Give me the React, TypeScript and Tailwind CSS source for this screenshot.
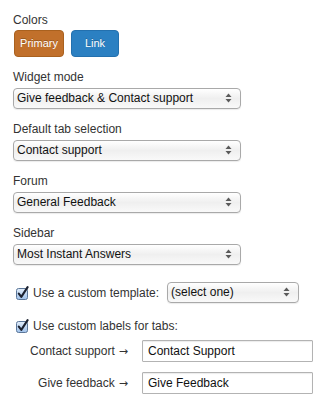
import React, { useState } from 'react';

const SelectArrows = () => (
  <svg className="w-[7px] h-[10px]" viewBox="0 0 7 10" fill="#5a5a5a">
    <path d="M3.5 0.5 L6.5 4 L0.5 4 Z" />
    <path d="M3.5 9.5 L6.5 6 L0.5 6 Z" />
  </svg>
);

interface MacSelectProps {
  options: string[];
  width: string;
}

const MacSelect: React.FC<MacSelectProps> = ({ options, width }) => {
  const [value, setValue] = useState(options[0]);
  return (
    <div className={`relative ${width} h-[21px]`}>
      <select
        value={value}
        onChange={(e) => setValue(e.target.value)}
        className="appearance-none w-full h-full pl-[3px] pr-[20px] text-[12px] leading-[19px] text-[#111] border border-[#a9a9a9] rounded-[4px] bg-linear-to-b from-white via-[#efefef] to-[#f9f9f9] shadow-[0_1px_1px_rgba(0,0,0,0.08)] outline-none"
      >
        {options.map((o) => (
          <option key={o}>{o}</option>
        ))}
      </select>
      <span className="absolute right-[9px] top-[5px] pointer-events-none flex">
        <SelectArrows />
      </span>
    </div>
  );
};

const CheckMark = () => (
  <svg className="w-[14px] h-[14px] shrink-0" viewBox="0 0 14 14">
    <defs>
      <linearGradient id="cbfill" x1="0" y1="0" x2="0" y2="1">
        <stop offset="0" stopColor="#e3eefa" />
        <stop offset="1" stopColor="#9fc1ea" />
      </linearGradient>
    </defs>
    <rect x="0.5" y="2.5" width="11" height="11" rx="2" fill="url(#cbfill)" stroke="#5b7698" />
    <path d="M2.8 7.6 L5.3 10.8 L11.6 1.2" fill="none" stroke="#1c2230" strokeWidth="2.1" strokeLinecap="round" strokeLinejoin="round" />
  </svg>
);

const Field: React.FC<{ label: string; options: string[] }> = ({ label, options }) => (
  <div className="flex flex-col">
    <label className="leading-[16px]">{label}</label>
    <div className="mt-[3px]">
      <MacSelect options={options} width="w-[228px]" />
    </div>
  </div>
);

const Arrow = () => (
  <span className="font-['DejaVu_Sans',sans-serif] text-[11px] ml-[4px]">→</span>
);

export default function App() {
  return (
    <div className="bg-white w-[325px] h-[409px] px-[13px] pt-[12px] font-['Liberation_Sans',Arial,sans-serif] text-[12px] text-[#333]">
      <div className="flex flex-col gap-[12px]">
        <div className="flex flex-col">
          <label className="leading-[16px]">Colors</label>
          <div className="mt-[2px] flex gap-[7px] pl-[1px]">
            <button className="w-[50px] h-[27px] rounded-[4px] bg-[#c1702b] border border-[#a9611f] text-white text-[11px] [text-shadow:0_-1px_0_rgba(0,0,0,0.25)]">
              Primary
            </button>
            <button className="w-[48px] h-[27px] rounded-[4px] bg-[#2b80c2] border border-[#2370ae] text-white text-[11px] [text-shadow:0_-1px_0_rgba(0,0,0,0.25)]">
              Link
            </button>
          </div>
        </div>
        <Field label="Widget mode" options={['Give feedback & Contact support', 'Give feedback', 'Contact support']} />
        <Field label="Default tab selection" options={['Contact support', 'Give feedback']} />
        <Field label="Forum" options={['General Feedback']} />
        <Field label="Sidebar" options={['Most Instant Answers', 'Top Ideas', 'None']} />
      </div>

      <div className="mt-[17px] flex items-center pl-[3px] h-[21px]">
        <CheckMark />
        <span className="ml-[3px]">Use a custom template:</span>
        <div className="ml-[8px]">
          <MacSelect options={['(select one)']} width="w-[132px]" />
        </div>
      </div>

      <div className="mt-[15px] flex items-center pl-[3px] h-[16px]">
        <CheckMark />
        <span className="ml-[3px]">Use custom labels for tabs:</span>
      </div>

      <div className="mt-[6px] grid grid-cols-[115px_171px] gap-x-[14px] gap-y-[10px] items-center">
        <span className="text-right">Contact support<Arrow /></span>
        <input
          defaultValue="Contact Support"
          className="h-[22px] px-[5px] text-[12px] text-[#111] border border-[#b3b3b3] rounded-[1px] shadow-[inset_0_1px_1px_rgba(0,0,0,0.08)] outline-none"
        />
        <span className="text-right">Give feedback<Arrow /></span>
        <input
          defaultValue="Give Feedback"
          className="h-[22px] px-[5px] text-[12px] text-[#111] border border-[#b3b3b3] rounded-[1px] shadow-[inset_0_1px_1px_rgba(0,0,0,0.08)] outline-none"
        />
      </div>
    </div>
  );
}
